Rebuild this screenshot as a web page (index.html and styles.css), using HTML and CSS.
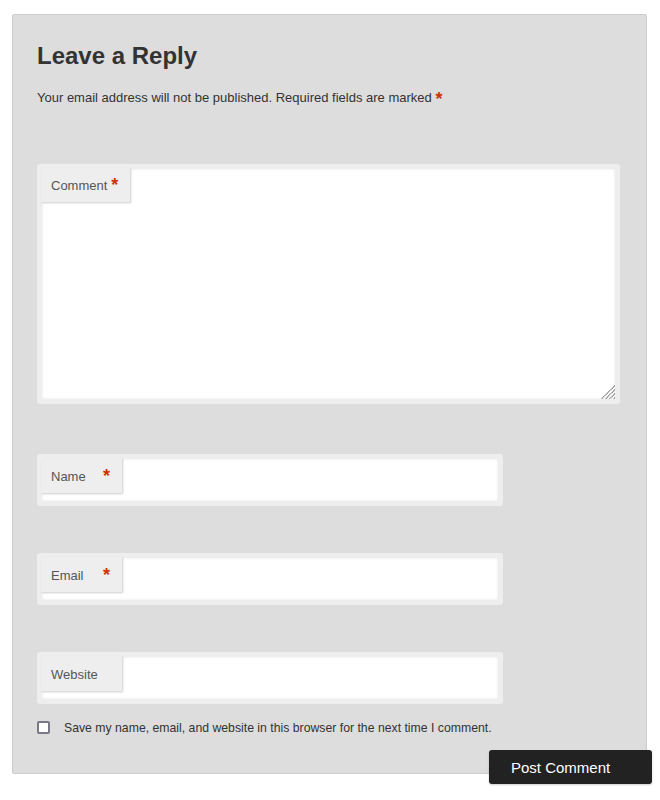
FILE: index.html
```html
<!DOCTYPE html>
<html lang="en">
<head>
<meta charset="utf-8">
<title>Leave a Reply</title>
<link rel="stylesheet" href="styles.css">
</head>
<body>
<div class="respond">
  <h3 class="reply-title">Leave a Reply</h3>
  <p class="notes">Your email address will not be published. Required fields are marked <span class="req req-notes">*</span></p>
  <form class="comment-form" onsubmit="return false">
    <div class="field field-comment">
      <label class="flabel flabel-auto" for="comment">Comment <span class="req">*</span></label>
      <textarea id="comment" class="ctext"></textarea>
      <svg class="grip" width="15" height="14" viewBox="0 0 15 14" aria-hidden="true">
        <path d="M15 0.5 L1.5 14 M15 4.5 L5.5 14 M15 8.5 L9.5 14 M15 12.5 L13.5 14" stroke="#6e6e6e" stroke-width="1.1" stroke-dasharray="1.2 0.5" fill="none"/>
      </svg>
    </div>
    <div class="field field-short f-name">
      <label class="flabel" for="author"><span class="ltext">Name</span><span class="req">*</span></label>
      <input id="author" class="stext" type="text">
    </div>
    <div class="field field-short f-next">
      <label class="flabel" for="email"><span class="ltext">Email</span><span class="req">*</span></label>
      <input id="email" class="stext" type="text">
    </div>
    <div class="field field-short f-next">
      <label class="flabel" for="url"><span class="ltext">Website</span></label>
      <input id="url" class="stext" type="text">
    </div>
    <div class="consent">
      <input id="consent" class="cbox" type="checkbox">
      <label for="consent" class="consent-label">Save my name, email, and website in this browser for the next time I comment.</label>
    </div>
    <div class="submit-row">
      <button type="submit" class="submit">Post Comment</button>
    </div>
  </form>
</div>
</body>
</html>
```

FILE: styles.css
```css
html, body {
  margin: 0;
  padding: 0;
  background: #ffffff;
}

html {
  min-height: 100%;
}

body {
  font-family: "Liberation Sans", Arial, sans-serif;
  color: #333333;
  padding-bottom: 16px;
}

.respond {
  margin: 14px 13px 0 12px;
  background: #dddddd;
  border: 1px solid #cccccc;
  border-radius: 2px;
  padding: 26px 26px 0 24px;
}

.reply-title {
  margin: 0;
  font-size: 24px;
  line-height: 29px;
  font-weight: bold;
  color: #333333;
}

.notes {
  margin: 18px 0 0;
  font-size: 13px;
  line-height: 20px;
  color: #333333;
}

.req {
  color: #cc3300;
  font-size: 18px;
  font-weight: bold;
  line-height: 0;
}

.req-notes {
  vertical-align: -3px;
}

.comment-form {
  margin: 0;
}

.field {
  position: relative;
}

.field-comment {
  margin-top: 56px;
}

.f-name {
  margin-top: 50px;
}

.f-next {
  margin-top: 47px;
}

.ctext,
.stext {
  display: block;
  box-sizing: border-box;
  margin: 0;
  padding: 0;
  border: 5px solid #eeeeee;
  border-radius: 3px;
  background: #ffffff;
  box-shadow: inset 0 0 3px rgba(0, 0, 0, 0.1);
  outline: none;
  font-family: "Liberation Sans", Arial, sans-serif;
}

.ctext {
  width: 100%;
  height: 240px;
  resize: none;
}

.stext {
  width: 466px;
  height: 52px;
}

.flabel {
  position: absolute;
  left: 4px;
  top: 4px;
  height: 34px;
  box-sizing: border-box;
  display: flex;
  align-items: center;
  padding-left: 10px;
  background: #eeeeee;
  box-shadow: 1px 1px 2px rgba(0, 0, 0, 0.2);
  font-size: 13px;
  color: #555555;
  white-space: nowrap;
}

.flabel-auto {
  padding-right: 12px;
  gap: 4px;
}

.field-short .flabel {
  width: 81px;
  height: 35px;
  padding-top: 1px;
}

.ltext {
  display: inline-block;
  width: 52px;
}

.grip {
  position: absolute;
  right: 5px;
  bottom: 5px;
}

.consent {
  margin-top: 15px;
  display: flex;
  align-items: center;
  gap: 14px;
  height: 16px;
}

.cbox {
  appearance: none;
  -webkit-appearance: none;
  margin: 0;
  width: 13px;
  height: 13px;
  box-sizing: border-box;
  border: 2px solid #787888;
  border-radius: 2px;
  background: #ffffff;
  flex: none;
}

.consent-label {
  font-size: 12.25px;
  line-height: 16px;
  color: #333333;
  padding-top: 2px;
}

.submit-row {
  margin-top: 15px;
  margin-bottom: -11px;
  display: flex;
  justify-content: flex-end;
  margin-right: -32px;
}

.submit {
  width: 163px;
  height: 34px;
  box-sizing: border-box;
  padding: 0 0 0 22px;
  text-align: left;
  background: #222222;
  color: #ffffff;
  border: none;
  border-radius: 3px;
  box-shadow: 0 1px 2px rgba(0, 0, 0, 0.2);
  font-family: "Liberation Sans", Arial, sans-serif;
  font-size: 15px;
  cursor: pointer;
}
```
